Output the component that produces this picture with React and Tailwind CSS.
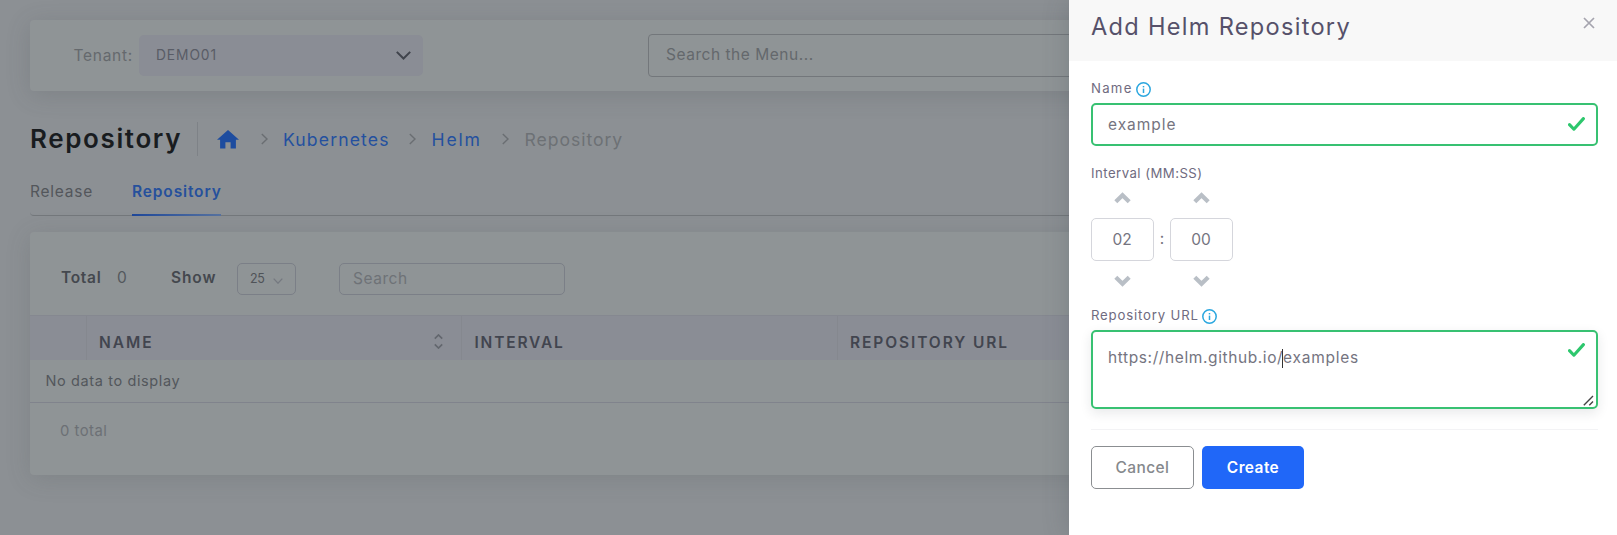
const Chevron = ({ className }) => (
  <svg className={className} viewBox="0 0 7 12" fill="none" stroke="currentColor" strokeWidth="1.4">
    <path d="M0.8 1L6 6L0.8 11" />
  </svg>
);

const Info = () => (
  <svg className="size-[15px] shrink-0 text-[#2ba7df]" viewBox="0 0 15 15" fill="none" stroke="currentColor">
    <circle cx="7.5" cy="7.5" r="6.7" strokeWidth="1.5" />
    <path d="M7.5 6.6V11" strokeWidth="1.5" />
    <path d="M7.5 4V5.4" strokeWidth="1.5" />
  </svg>
);

const Check = () => (
  <svg className="h-[15px] w-[17px] shrink-0" viewBox="0 0 17 15" fill="none" stroke="#2dc76d" strokeWidth="3.1">
    <path d="M1.5 7.6L5.9 12.2L15.4 1.6" strokeLinejoin="round" strokeLinecap="round" />
  </svg>
);

const Arrow = ({ down }) => (
  <svg
    className={down ? "h-[12px] w-[17px] rotate-180" : "h-[12px] w-[17px]"}
    viewBox="0 0 17 12"
    fill="none"
    stroke="#b9bfc6"
    strokeWidth="4.2"
  >
    <path d="M1.8 9.8L8.5 3.2L15.2 9.8" />
  </svg>
);

const Spinner = ({ value }) => (
  <div className="flex w-[63px] flex-col items-center">
    <Arrow />
    <div className="mt-[14px] flex h-[43px] w-full items-center justify-center rounded-[5px] border border-[#d5d6dc] pr-[1px] text-[15.5px] text-[#75747f]">
      {value}
    </div>
    <div className="mt-[14px] flex">
      <Arrow down />
    </div>
  </div>
);

function TopBar() {
  return (
    <div className="flex h-[71px] shrink-0 items-center rounded-l-[4px] bg-[#8f9496] pl-[43.5px] shadow-[0_4px_24px_0_rgba(70,75,80,0.2)]">
      <span className="w-[65.5px] text-[15.5px] tracking-[0.72px] text-[#65696d]">Tenant:</span>
      <div className="flex h-[41px] w-[284px] items-center justify-between rounded-[5px] bg-[#8a8d95] pl-[17px] pr-[12px]">
        <span className="text-[13.8px] tracking-[0.9px] text-[#595c66]">DEMO01</span>
        <svg className="h-[9px] w-[15px]" viewBox="0 0 15 9" fill="none" stroke="#3f434b" strokeWidth="2">
          <path d="M0.8 0.9L7.5 7.5L14.2 0.9" />
        </svg>
      </div>
      <div className="ml-[225px] flex h-[43px] w-[640px] items-center rounded-[4px] border border-[#73777b] pb-[1px] pl-[17px]">
        <span className="text-[15.5px] tracking-[0.53px] text-[#64686c]">Search the Menu...</span>
      </div>
    </div>
  );
}

function Breadcrumb() {
  return (
    <div className="mt-[31px] flex h-[34px] shrink-0 items-center text-[17.6px] text-[#24509f]">
      <h1 className="w-[168px] border-r border-[#7e8287] text-[26px] leading-[34px] font-semibold tracking-[1.62px] text-[#191c1f]">
        Repository
      </h1>
      <svg className="ml-[18.5px] h-[19px] w-[22px]" viewBox="0 0 22 19" fill="#1d4c9f">
        <path d="M11 0L22 9.8H18.9V18.6H13.6V12.2H8.4V18.6H3.1V9.8H0Z" />
      </svg>
      <Chevron className="ml-[22px] h-[12px] w-[7px] text-[#6a6e72]" />
      <span className="ml-[15.5px] w-[107.5px] pt-[2px] tracking-[1.12px]">Kubernetes</span>
      <Chevron className="ml-[18px] h-[12px] w-[7px] text-[#6a6e72]" />
      <span className="ml-[16px] w-[52px] pt-[2px] tracking-[1.8px]">Helm</span>
      <Chevron className="ml-[18px] h-[12px] w-[7px] text-[#6a6e72]" />
      <span className="ml-[16px] pt-[2px] tracking-[0.95px] text-[#6d7175]">Repository</span>
    </div>
  );
}

function Tabs() {
  return (
    <div className="mt-[10px] flex h-[50px] shrink-0 rounded-bl-[4px] border-b border-[#74787c] text-[15.5px] leading-[51px]">
      <span className="w-[102px] tracking-[0.76px] text-[#53565b]">Release</span>
      <div className="flex h-[50px] w-[89px] flex-col justify-between text-[#26509c]">
        <span className="h-[48px] font-semibold tracking-[0.86px]">Repository</span>
        <div className="h-[2px] bg-linear-to-r from-[#1f489a] to-[#57729f]" />
      </div>
    </div>
  );
}

function Table() {
  return (
    <div className="mt-[16px] flex h-[243px] shrink-0 flex-col rounded-l-[4px] bg-[#8f9496] shadow-[0_4px_24px_0_rgba(70,75,80,0.18)]">
      <div className="flex h-[83px] items-center pt-[11px] pl-[31px] text-[15.5px]">
        <span className="w-[56px] pb-[2px] font-semibold tracking-[0.7px] text-[#44484e]">Total</span>
        <span className="w-[54px] pb-[2px] text-[#54585d]">0</span>
        <span className="w-[66px] pb-[2px] font-semibold tracking-[0.9px] text-[#44484e]">Show</span>
        <div className="flex h-[32px] w-[59px] items-center rounded-[5px] border border-[#7b7f87] pl-[12px]">
          <span className="w-[22px] text-[12.5px] tracking-[-0.3px] text-[#4f5358]">25</span>
          <svg className="mt-[4px] ml-[1px] h-[6px] w-[10px]" viewBox="0 0 10 6" fill="none" stroke="#757980" strokeWidth="1.3">
            <path d="M0.7 0.6L5 5.2L9.3 0.6" />
          </svg>
        </div>
        <div className="ml-[43px] flex h-[32px] w-[226px] items-center rounded-[5px] border border-[#7b7f87] pl-[13px]">
          <span className="tracking-[0.55px] text-[#6e7277]">Search</span>
        </div>
      </div>
      <div className="flex h-[45px] border-t border-[#858890] bg-[#8a8d95] text-[15.5px] leading-[45px] font-semibold text-[#42454f]">
        <div className="w-[57px] border-r border-[#85888f]" />
        <div className="flex w-[375px] items-center justify-between border-r border-[#85888f] pt-[8px] pr-[18px] pl-[12px]">
          <span className="tracking-[2px]">NAME</span>
          <svg className="mb-[2px] h-[15px] w-[9px]" viewBox="0 0 9 15" fill="none" stroke="#63676e" strokeWidth="1.7">
            <path d="M0.8 4.6L4.5 1L8.2 4.6M0.8 10.4L4.5 14L8.2 10.4" />
          </svg>
        </div>
        <div className="w-[376px] border-r border-[#85888f] pt-[4px] pl-[12.5px] tracking-[1.8px]">INTERVAL</div>
        <div className="pt-[4px] pl-[12px] tracking-[1.9px]">REPOSITORY URL</div>
      </div>
      <div className="h-[43px] border-b border-[#80838c] pl-[15.5px] text-[14.5px] leading-[42px] tracking-[0.62px] text-[#53575c]">
        No data to display
      </div>
      <div className="pl-[30px] text-[14.8px] leading-[57px] tracking-[0.5px] text-[#6c7075]">0 total</div>
    </div>
  );
}

function Drawer() {
  return (
    <aside className="absolute inset-y-0 right-0 flex w-[548px] flex-col bg-white whitespace-nowrap shadow-[0_0_24px_0_rgba(60,70,80,0.25)]">
      <header className="flex h-[61px] shrink-0 items-start justify-between bg-[#f8f8f8] pr-[22px] pl-[22px]">
        <h2 className="text-[23.6px] leading-[54px] tracking-[1.28px] text-[#56516a]">Add Helm Repository</h2>
        <svg className="mt-[17px] h-[12px] w-[12px]" viewBox="0 0 12 12" stroke="#a5a4ae" strokeWidth="1.7">
          <path d="M1 1L11 11M11 1L1 11" />
        </svg>
      </header>
      <div className="flex flex-col pr-[19px] pl-[22px] text-[#75747f]">
        <label className="mt-[18px] flex h-[20px] items-center gap-[3px] text-[13.2px] text-[#6f6b80]">
          <span className="w-[42px] tracking-[1.25px]">Name</span>
          <Info />
        </label>
        <div className="mt-[4px] flex h-[43px] items-center justify-between rounded-[5px] border-2 border-[#38c172] pr-[11px] pl-[15px] text-[15.5px]">
          <span className="pt-[1px] tracking-[0.95px]">example</span>
          <Check />
        </div>
        <div className="mt-[18px] h-[20px] text-[13.2px] leading-[19px] tracking-[0.46px] text-[#6f6b80]">Interval (MM:SS)</div>
        <div className="mt-[8px] flex h-[95px] items-center">
          <Spinner value="02" />
          <span className="w-[16px] pb-[2px] text-center text-[15.5px]">:</span>
          <Spinner value="00" />
        </div>
        <label className="mt-[19px] flex h-[20px] items-center gap-[3px] text-[13.2px] text-[#6f6b80]">
          <span className="w-[107.5px] tracking-[0.82px]">Repository URL</span>
          <Info />
        </label>
        <div className="mt-[4px] flex h-[79px] justify-between rounded-[5px] border-2 border-[#38c172] pl-[15px] text-[15.5px] shadow-[0_4px_12px_0_rgba(34,41,47,0.1)]">
          <div className="flex h-[24px] items-center pt-[26px]">
            <span className="w-[175px] tracking-[0.6px]">https://helm.github.io/</span>
            <span className="-ml-px h-[19px] w-px bg-[#333]" />
            <span className="tracking-[0.76px]">examples</span>
          </div>
          <div className="flex flex-col items-end justify-between pt-[11px] pr-[2px] pb-[1px]">
            <div className="pr-[9px]">
              <Check />
            </div>
            <svg className="h-[11px] w-[11px]" viewBox="0 0 11 11" stroke="#444" strokeWidth="1.4">
              <path d="M0.8 10.2L10 1M6.3 10.2L10 6.5" />
            </svg>
          </div>
        </div>
        <div className="mt-[20px] border-t border-[#f3f3f5]" />
        <div className="mt-[16px] flex gap-[8px] text-[15.5px]">
          <button className="h-[43px] w-[103px] rounded-[5px] border border-[#8b8e91] font-medium tracking-[0.4px] text-[#85888c]">
            Cancel
          </button>
          <button className="h-[43px] w-[102px] rounded-[5px] bg-[#2067f8] font-semibold tracking-[0.4px] text-white">
            Create
          </button>
        </div>
      </div>
    </aside>
  );
}

export default function App() {
  return (
    <div className="relative h-[535px] w-full overflow-hidden bg-[#8c9094] font-['Inter','Liberation_Sans',sans-serif]">
      <main className="flex h-full flex-col pt-[20px] pl-[30px] whitespace-nowrap">
        <TopBar />
        <Breadcrumb />
        <Tabs />
        <Table />
      </main>
      <Drawer />
    </div>
  );
}
